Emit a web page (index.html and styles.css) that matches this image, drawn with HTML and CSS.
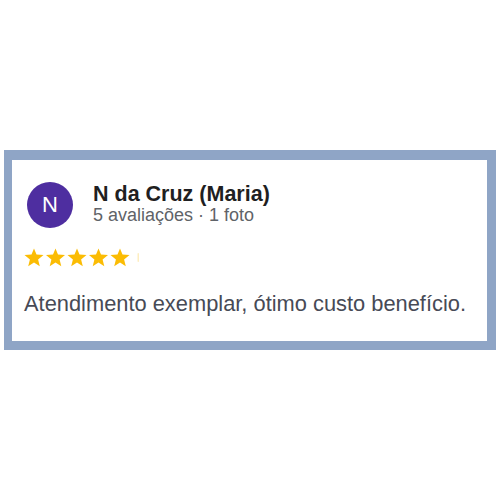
FILE: index.html
```html
<!DOCTYPE html>
<html>
<head>
<meta charset="utf-8">
<link rel="stylesheet" href="styles.css">
</head>
<body>
<div class="page">
  <div class="card">
    <div class="header">
      <div class="avatar">N</div>
      <div class="meta">
        <div class="name">N da Cruz (Maria)</div>
        <div class="sub">5 avaliações · 1 foto</div>
      </div>
    </div>
    <div class="stars">
      <svg width="120" height="19" viewBox="0 0 120 19">
        <g fill="#fbbc04">
          <polygon points="10,0.5 12.5,6.6 19.5,7.1 14.1,11.5 15.8,18.3 10,14.6 4.2,18.3 5.9,11.5 0.5,7.1 7.5,6.6"/>
          <polygon transform="translate(21.5,0)" points="10,0.5 12.5,6.6 19.5,7.1 14.1,11.5 15.8,18.3 10,14.6 4.2,18.3 5.9,11.5 0.5,7.1 7.5,6.6"/>
          <polygon transform="translate(43,0)" points="10,0.5 12.5,6.6 19.5,7.1 14.1,11.5 15.8,18.3 10,14.6 4.2,18.3 5.9,11.5 0.5,7.1 7.5,6.6"/>
          <polygon transform="translate(64.5,0)" points="10,0.5 12.5,6.6 19.5,7.1 14.1,11.5 15.8,18.3 10,14.6 4.2,18.3 5.9,11.5 0.5,7.1 7.5,6.6"/>
          <polygon transform="translate(86,0)" points="10,0.5 12.5,6.6 19.5,7.1 14.1,11.5 15.8,18.3 10,14.6 4.2,18.3 5.9,11.5 0.5,7.1 7.5,6.6"/>
        </g>
        <rect x="113.5" y="5" width="1.5" height="9" rx="0.75" fill="#fbbc04" opacity="0.25"/>
      </svg>
    </div>
    <p class="text">Atendimento exemplar, ótimo custo benefício.</p>
  </div>
</div>
</body>
</html>
```
FILE: styles.css
```css
html, body {
  margin: 0;
  padding: 0;
  background: #ffffff;
}
.page {
  width: 500px;
  height: 500px;
  padding-top: 150px;
  padding-left: 4px;
  box-sizing: border-box;
  font-family: "Liberation Sans", Arial, sans-serif;
}
.card {
  width: 492px;
  height: 200px;
  box-sizing: border-box;
  border-style: solid;
  border-color: #8fa5c6;
  border-width: 10px 9px 9px 8px;
  background: #fff;
  padding: 22px 0 0 12px;
}
.header {
  display: flex;
  align-items: flex-start;
  gap: 20px;
}
.avatar {
  width: 46px;
  height: 46px;
  margin-left: 3px;
  border-radius: 50%;
  background: #4e2ea0;
  color: #fff;
  font-size: 22px;
  display: flex;
  align-items: center;
  justify-content: center;
  flex-shrink: 0;
}
.meta {
  display: flex;
  flex-direction: column;
  padding-top: 0.5px;
}
.name {
  font-size: 21.5px;
  line-height: 22px;
  font-weight: bold;
  color: #1f1f22;
}
.sub {
  font-size: 18px;
  line-height: 20px;
  color: #5f6368;
}
.stars {
  margin-top: 20px;
  height: 19px;
  line-height: 0;
}
.text {
  margin: 24px 0 0 0;
  font-size: 21.85px;
  line-height: 26px;
  color: #474a56;
}
```
